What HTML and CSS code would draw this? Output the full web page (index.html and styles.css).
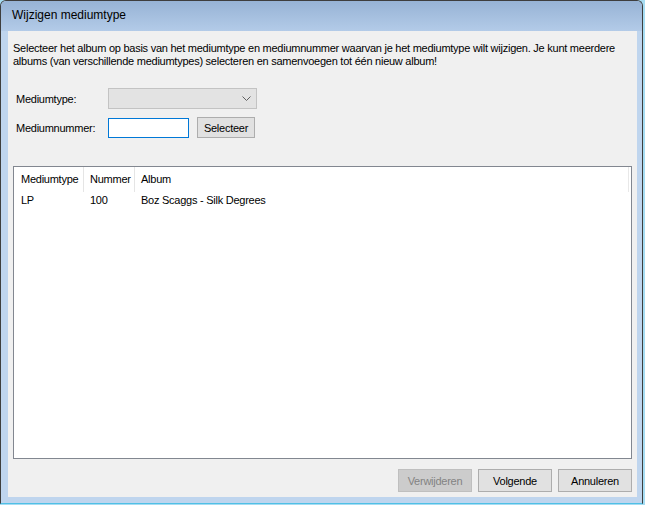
FILE: index.html
```html
<!DOCTYPE html>
<html>
<head>
<meta charset="utf-8">
<link rel="stylesheet" href="styles.css">
</head>
<body>
<div class="window">
  <div class="titlebar">Wijzigen mediumtype</div>
  <div class="client">
    <p class="intro">Selecteer het album op basis van het mediumtype en mediumnummer waarvan je het mediumtype wilt wijzigen. Je kunt meerdere albums (van verschillende mediumtypes) selecteren en samenvoegen tot één nieuw album!</p>
    <div class="form">
      <div class="frow">
        <span class="label">Mediumtype:</span>
        <div class="combo">
          <svg class="chev" width="9" height="6" viewBox="0 0 9 6"><polyline points="0.5,0.5 4.5,4.5 8.5,0.5" fill="none" stroke="#606060" stroke-width="1"/></svg>
        </div>
      </div>
      <div class="frow">
        <span class="label">Mediumnummer:</span>
        <div class="textbox"></div>
        <button class="btn sel">Selecteer</button>
      </div>
    </div>
    <div class="list">
      <div class="lhead">
        <div class="col c1">Mediumtype</div>
        <div class="col c2">Nummer</div>
        <div class="col c3">Album</div>
      </div>
      <div class="lrow">
        <div class="cell c1">LP</div>
        <div class="cell c2">100</div>
        <div class="cell c3">Boz Scaggs - Silk Degrees</div>
      </div>
    </div>
    <div class="buttons">
      <button class="btn big disabled">Verwijderen</button>
      <button class="btn big">Volgende</button>
      <button class="btn big">Annuleren</button>
    </div>
  </div>
</div>
</body>
</html>
```
FILE: styles.css
```css
html, body {
  margin: 0;
  padding: 0;
  background: #a6dcf2;
}
body {
  width: 645px;
  height: 505px;
  overflow: hidden;
  font-family: "Liberation Sans", Arial, sans-serif;
  font-size: 11px;
  letter-spacing: -0.25px;
  color: #000;
}
.window {
  box-sizing: border-box;
  width: 643px;
  height: 504px;
  border: 1px solid #3e3e3e;
  border-bottom-color: #4fc0e6;
  border-radius: 6px 6px 0 0;
  background: #bfd5ee;
  padding: 0 5px 6px 7px;
  display: flex;
  flex-direction: column;
}
.titlebar {
  height: 30px;
  margin: 0 -5px 0 -7px;
  padding-left: 11px;
  background: linear-gradient(#97b3d5, #b3cbe8);
  border-radius: 5px 5px 0 0;
  font-size: 12px;
  letter-spacing: 0;
  line-height: 29px;
  color: #000;
}
.client {
  width: 629px;
  height: 466px;
  background: #f0f0f0;
  display: flex;
  flex-direction: column;
  box-sizing: border-box;
  padding: 11px 5px 5px 5px;
}
.intro {
  margin: 0;
  line-height: 13px;
  padding-right: 2px;
}
.form {
  margin-top: 20px;
  display: flex;
  flex-direction: column;
  gap: 8px;
  padding-left: 3px;
}
.frow {
  display: flex;
  align-items: center;
  height: 21px;
}
.label {
  width: 92px;
}
.combo {
  box-sizing: border-box;
  width: 149px;
  height: 21px;
  background: #e3e3e3;
  border: 1px solid #c3c3c3;
  display: flex;
  align-items: center;
  justify-content: flex-end;
  padding-right: 5px;
}
.textbox {
  box-sizing: border-box;
  width: 81px;
  height: 20px;
  background: #fff;
  border: 1px solid #0078d7;
}
.btn {
  box-sizing: border-box;
  font-family: "Liberation Sans", Arial, sans-serif;
  font-size: 11px;
  letter-spacing: -0.25px;
  color: #000;
  background: #e1e1e1;
  border: 1px solid #adadad;
  padding: 0;
  margin: 0;
}
.sel {
  width: 58px;
  height: 21px;
  margin-left: 8px;
}
.list {
  box-sizing: border-box;
  margin-top: 28px;
  width: 619px;
  height: 293px;
  background: #fff;
  border: 1px solid #828790;
}
.lhead {
  display: flex;
  height: 25px;
  margin-right: 2px;
  border-right: 1px solid #e8e8e8;
}
.col {
  box-sizing: border-box;
  line-height: 25px;
  padding-left: 6px;
  border-right: 1px solid #e5e5e5;
}
.col.c3 {
  border-right: none;
  flex: 1;
}
.c1 { width: 70px; padding-left: 7px; }
.c2 { width: 51px; }
.c3 { flex: 1; }
.lrow {
  display: flex;
  height: 17px;
  line-height: 17px;
}
.cell {
  box-sizing: border-box;
  padding-left: 6px;
}
.cell.c1 { padding-left: 7px; }
.buttons {
  margin-top: 10px;
  display: flex;
  justify-content: flex-end;
  gap: 6px;
}
.big {
  width: 74px;
  height: 23px;
}
.disabled {
  background: #cccccc;
  border-color: #bfbfbf;
  color: #838383;
}
```
